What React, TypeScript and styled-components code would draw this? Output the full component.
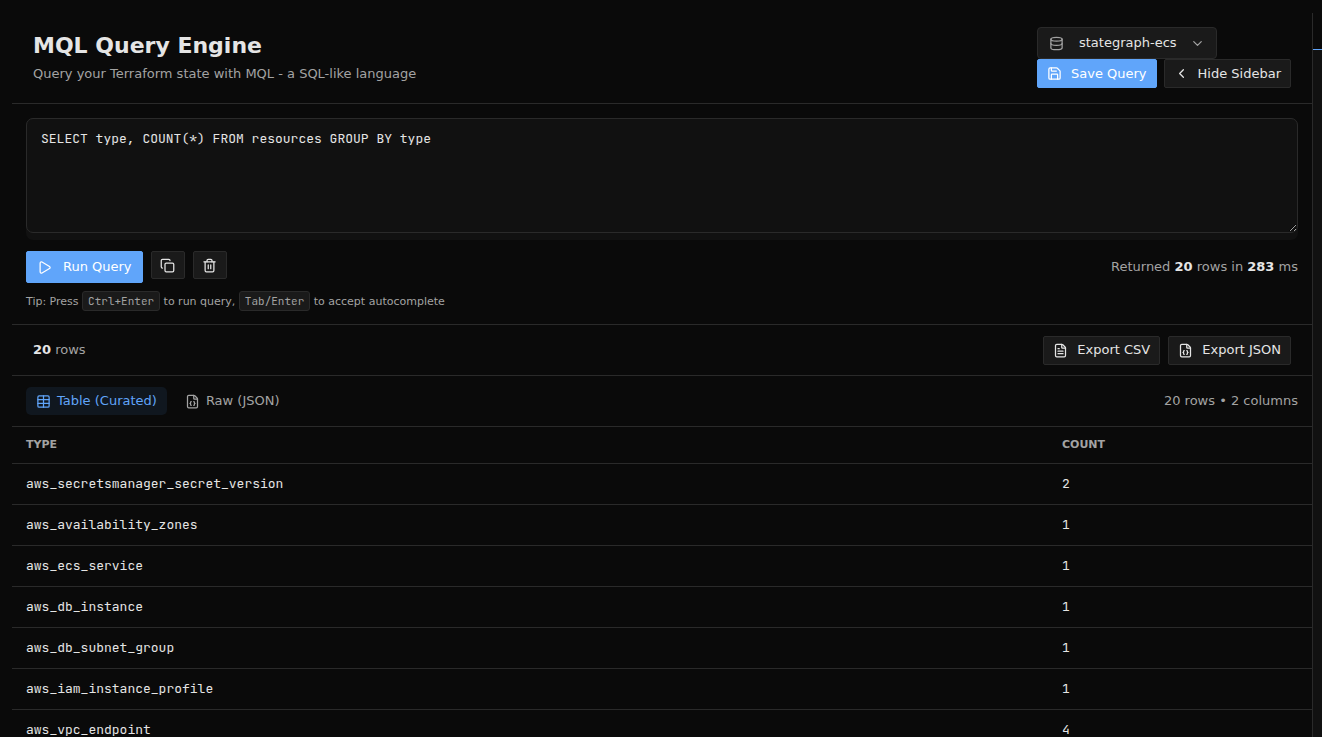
import React, { useState } from "react";
import styled, { createGlobalStyle, css } from "styled-components";
import {
  ChevronDown,
  ChevronLeft,
  Copy,
  Database,
  FileBraces,
  FileText,
  Play,
  Save,
  Table,
  Trash2,
} from "lucide-react";

const color = {
  page: "#0a0a0a",
  raised: "#111111",
  control: "#1a1a1a",
  line: "#2a2a2a",
  text: "#e5e5e5",
  muted: "#a3a3a3",
  accent: "#60a5fa",
};

const mono = `"JetBrains Mono", "DejaVu Sans Mono", monospace`;

const GlobalStyle = createGlobalStyle`
  *, *::before, *::after { box-sizing: border-box; }
  html, body { height: 100%; }
  body {
    margin: 0;
    overflow: hidden;
    background: ${color.page};
    color: ${color.text};
    font: 13px/20px "DejaVu Sans", sans-serif;
  }
  #root { height: 100%; }
  button, select, textarea { font: inherit; color: inherit; margin: 0; }
  svg { flex: none; }
`;

const Page = styled.div`
  display: flex;
  height: 100%;
  padding: 13px 0 0 12px;
`;

const Main = styled.main`
  flex: 1;
  min-width: 0;
  overflow: hidden;
`;

const Sidebar = styled.aside`
  display: flex;
  flex-direction: column;
  flex: 0 0 10px;
  border-left: 1px solid ${color.line};
  background: ${color.raised};
`;

const SidebarTabs = styled.div`
  height: 37px;
  border-bottom: 1px solid ${color.accent};
  background: ${color.page};
`;

const Header = styled.header`
  display: flex;
  justify-content: space-between;
  padding: 14px 21px 15px;
  border-bottom: 1px solid ${color.line};
`;

const Title = styled.h1`
  margin: 5px 0 4px;
  font-size: 22px;
  line-height: 28px;
`;

const Subtitle = styled.p`
  margin: 0;
  color: ${color.muted};
`;

const HeaderActions = styled.div`
  display: flex;
  flex-direction: column;
  align-items: flex-start;
`;

const Picker = styled.label`
  display: grid;
  grid-template-columns: 15px 1fr 15px;
  align-items: center;
  width: 180px;
  height: 32px;
  padding: 0 11px;
  border: 1px solid ${color.line};
  border-radius: 4px;
  background: ${color.control};
  color: ${color.muted};
`;

const PickerSelect = styled.select`
  appearance: none;
  padding: 0 0 0 15px;
  border: 0;
  outline: 0;
  background: transparent;
  color: ${color.text};
`;

const ButtonRow = styled.div<{ $gap?: number }>`
  display: flex;
  align-items: flex-start;
  gap: ${(p) => p.$gap ?? 8}px;
`;

const Button = styled.button<{ $primary?: boolean; $large?: boolean }>`
  display: inline-flex;
  align-items: center;
  gap: ${(p) => (p.$large ? 11 : 9)}px;
  height: ${(p) => (p.$large ? 32 : 29)}px;
  padding: 0 ${(p) => (p.$large ? 10 : 9)}px;
  border: 1px solid ${(p) => (p.$primary ? color.accent : color.line)};
  border-radius: 2px;
  background: ${(p) => (p.$primary ? color.accent : color.control)};
  color: ${(p) => (p.$primary ? "#ffffff" : color.text)};
  white-space: nowrap;
  cursor: pointer;
`;

const IconButton = styled(Button)`
  justify-content: center;
  width: 34px;
  height: 28px;
  padding: 0;
`;

const Editor = styled.section`
  padding: 14px 14px 12px;
  border-bottom: 1px solid ${color.line};
`;

const QueryFrame = styled.div`
  padding-bottom: 7px;
  border-radius: 7px;
  background: ${color.raised};
`;

const QueryInput = styled.textarea`
  display: block;
  width: 100%;
  height: 115px;
  padding: 10px 14px;
  border: 1px solid ${color.line};
  border-radius: 7px;
  outline: 0;
  background: ${color.raised};
  font-family: ${mono};
  resize: vertical;
`;

const RunBar = styled.div`
  display: flex;
  align-items: center;
  justify-content: space-between;
  margin: 11px 0 8px;
`;

const Muted = styled.span`
  color: ${color.muted};

  strong { color: ${color.text}; }
`;

const Tip = styled.p`
  margin: 0;
  color: ${color.muted};
  font-size: 11px;
`;

const Key = styled.kbd`
  display: inline-block;
  padding: 0 5px;
  border: 1px solid ${color.line};
  border-radius: 3px;
  background: ${color.control};
  font: 11px/18px ${mono};
`;

const ResultBar = styled.div`
  display: flex;
  align-items: center;
  justify-content: space-between;
  height: 51px;
  padding: 0 21px;
  border-bottom: 1px solid ${color.line};
`;

const TabBar = styled(ResultBar)`
  padding: 0 14px;
`;

const Tab = styled.button<{ $active: boolean }>`
  display: inline-flex;
  align-items: center;
  gap: 6px;
  height: 28px;
  padding: 0 10px;
  border: 0;
  border-radius: 5px;
  background: transparent;
  color: ${color.muted};
  cursor: pointer;
  ${(p) =>
    p.$active &&
    css`
      background: #10171f;
      color: ${color.accent};
    `}
`;

const ResultTable = styled.table`
  width: 100%;
  border-collapse: separate;
  border-spacing: 0;
  table-layout: fixed;
`;

const CountColumn = styled.col`
  width: 264px;
`;

const HeadCell = styled.th`
  height: 37px;
  padding: 0 14px;
  border-bottom: 1px solid ${color.line};
  color: ${color.muted};
  font-size: 11px;
  text-align: left;
`;

const Cell = styled.td`
  height: 41px;
  padding: 0 14px;
  border-bottom: 1px solid ${color.line};
  font-family: ${mono};
`;

const rows: [string, number][] = [
  ["aws_secretsmanager_secret_version", 2],
  ["aws_availability_zones", 1],
  ["aws_ecs_service", 1],
  ["aws_db_instance", 1],
  ["aws_db_subnet_group", 1],
  ["aws_iam_instance_profile", 1],
  ["aws_vpc_endpoint", 4],
];

export default function App() {
  const [query, setQuery] = useState("SELECT type, COUNT(*) FROM resources GROUP BY type");
  const [view, setView] = useState("table");

  return (
    <>
      <GlobalStyle />
      <Page>
        <Main>
          <Header>
            <div>
              <Title>MQL Query Engine</Title>
              <Subtitle>Query your Terraform state with MQL - a SQL-like language</Subtitle>
            </div>
            <HeaderActions>
              <Picker>
                <Database size={15} />
                <PickerSelect aria-label="State">
                  <option>stategraph-ecs</option>
                </PickerSelect>
                <ChevronDown size={15} />
              </Picker>
              <ButtonRow $gap={7}>
                <Button $primary>
                  <Save size={15} />
                  Save Query
                </Button>
                <Button>
                  <ChevronLeft size={15} />
                  Hide Sidebar
                </Button>
              </ButtonRow>
            </HeaderActions>
          </Header>

          <Editor>
            <QueryFrame>
              <QueryInput
                aria-label="MQL query"
                spellCheck={false}
                value={query}
                onChange={(e) => setQuery(e.target.value)}
              />
            </QueryFrame>
            <RunBar>
              <ButtonRow>
                <Button $primary $large>
                  <Play size={15} />
                  Run Query
                </Button>
                <IconButton aria-label="Copy query">
                  <Copy size={15} />
                </IconButton>
                <IconButton aria-label="Clear query" onClick={() => setQuery("")}>
                  <Trash2 size={15} />
                </IconButton>
              </ButtonRow>
              <Muted>
                Returned <strong>20</strong> rows in <strong>283</strong> ms
              </Muted>
            </RunBar>
            <Tip>
              Tip: Press <Key>Ctrl+Enter</Key> to run query, <Key>Tab/Enter</Key> to accept
              autocomplete
            </Tip>
          </Editor>

          <ResultBar>
            <Muted>
              <strong>20</strong> rows
            </Muted>
            <ButtonRow>
              <Button>
                <FileText size={15} />
                Export CSV
              </Button>
              <Button>
                <FileBraces size={15} />
                Export JSON
              </Button>
            </ButtonRow>
          </ResultBar>

          <TabBar>
            <ButtonRow>
              <Tab $active={view === "table"} onClick={() => setView("table")}>
                <Table size={15} />
                Table (Curated)
              </Tab>
              <Tab $active={view === "raw"} onClick={() => setView("raw")}>
                <FileBraces size={15} />
                Raw (JSON)
              </Tab>
            </ButtonRow>
            <Muted>20 rows • 2 columns</Muted>
          </TabBar>

          <ResultTable>
            <colgroup>
              <col />
              <CountColumn />
            </colgroup>
            <thead>
              <tr>
                <HeadCell>TYPE</HeadCell>
                <HeadCell>COUNT</HeadCell>
              </tr>
            </thead>
            <tbody>
              {rows.map(([type, count]) => (
                <tr key={type}>
                  <Cell>{type}</Cell>
                  <Cell>{count}</Cell>
                </tr>
              ))}
            </tbody>
          </ResultTable>
        </Main>
        <Sidebar aria-label="Saved queries">
          <SidebarTabs />
        </Sidebar>
      </Page>
    </>
  );
}
